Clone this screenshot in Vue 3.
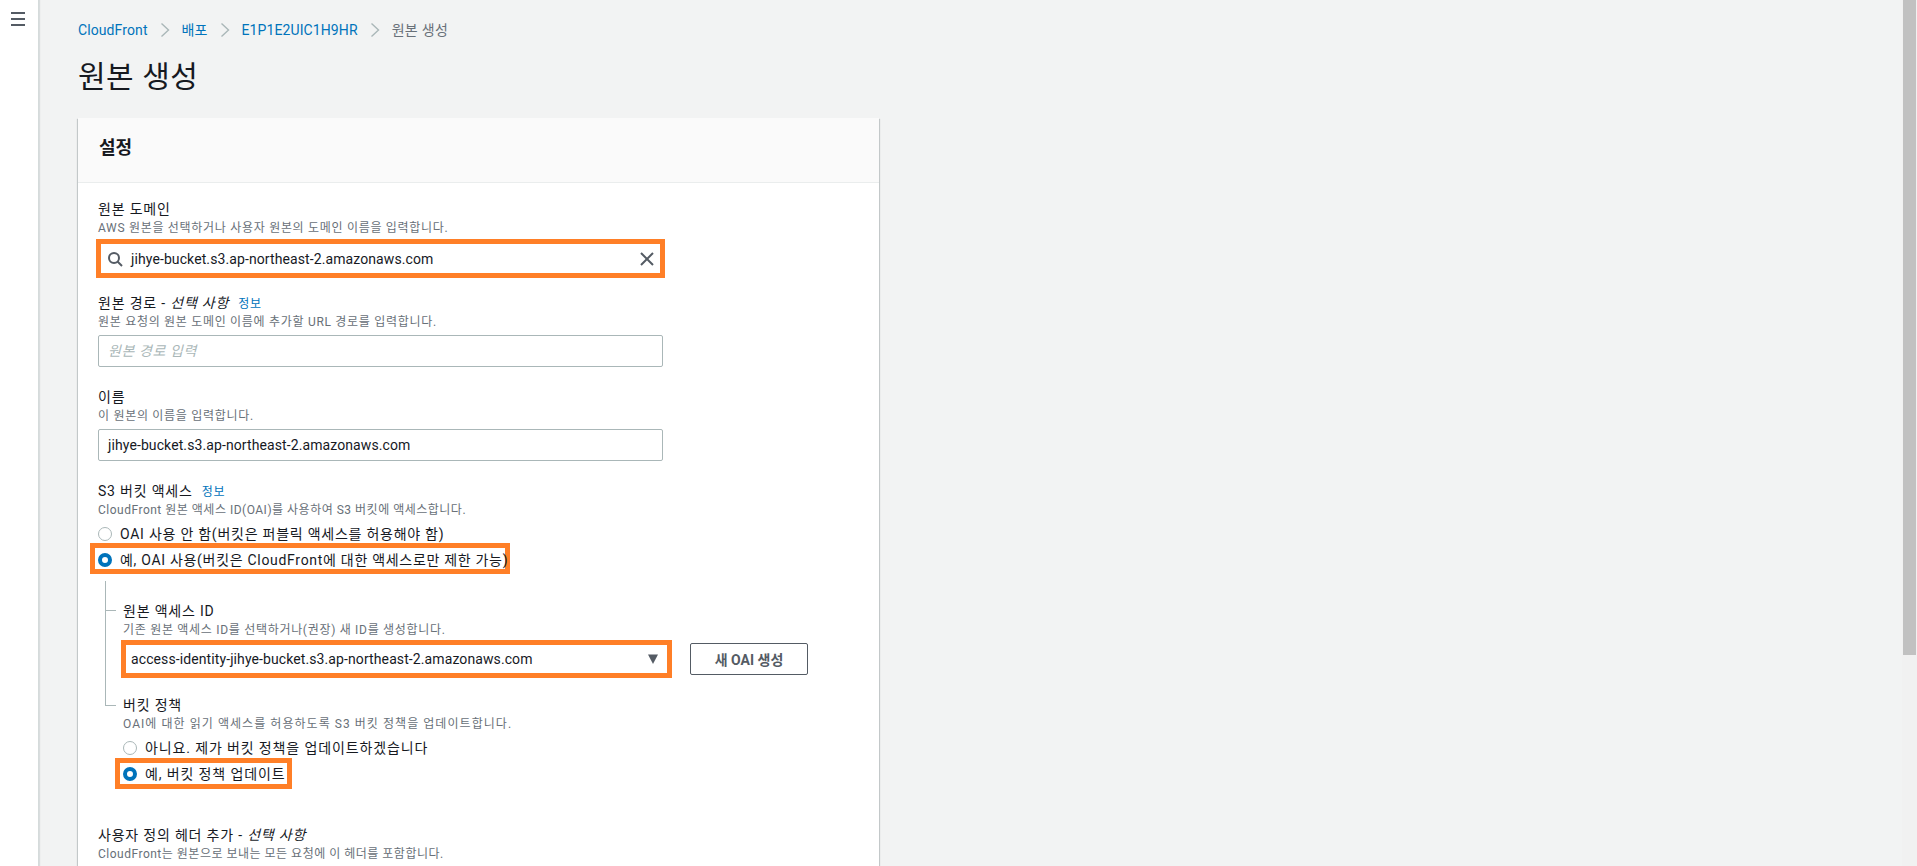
<template>
  <div class="app">
    <!-- 좌측 접힌 내비게이션 -->
    <aside class="sidebar">
      <svg class="menu" width="14" height="14" viewBox="0 0 14 14">
        <path d="M0 1h14M0 7h14M0 13h14" stroke="#545b64" stroke-width="2" fill="none" />
      </svg>
    </aside>

    <main class="main">
      <nav class="crumbs">
        <template v-for="(c, i) in crumbs" :key="c.text">
          <svg v-if="i > 0" class="chev" width="10" height="16" viewBox="0 0 10 16">
            <path d="M1.5 1.5L8.5 8L1.5 14.5" stroke="#aab7b8" stroke-width="1.4" fill="none" />
          </svg>
          <a :class="{ current: !c.link }">{{ c.text }}</a>
        </template>
      </nav>
      <h1 class="title">원본 생성</h1>

      <section class="card">
        <header class="card-head">설정</header>
        <div class="card-body">
          <div class="field">
            <div class="label">원본 도메인</div>
            <div class="desc">AWS 원본을 선택하거나 사용자 원본의 도메인 이름을 입력합니다.</div>
            <div class="hl hl-input">
              <svg class="search" width="16" height="16" viewBox="0 0 16 16">
                <circle cx="7" cy="7" r="5" stroke="#545b64" stroke-width="2" fill="none" />
                <path d="M10.5 10.5L15 15" stroke="#545b64" stroke-width="2" fill="none" />
              </svg>
              <span class="value">{{ domain }}</span>
              <svg class="clear" width="14" height="14" viewBox="0 0 14 14">
                <path d="M1 1L13 13M13 1L1 13" stroke="#545b64" stroke-width="2" fill="none" />
              </svg>
            </div>
          </div>

          <div class="field">
            <div class="label">원본 경로 - <i>선택 사항</i><a class="info">정보</a></div>
            <div class="desc">원본 요청의 원본 도메인 이름에 추가할 URL 경로를 입력합니다.</div>
            <div class="input placeholder">원본 경로 입력</div>
          </div>

          <div class="field">
            <div class="label">이름</div>
            <div class="desc">이 원본의 이름을 입력합니다.</div>
            <div class="input value">{{ domain }}</div>
          </div>

          <div class="field">
            <div class="label">S3 버킷 액세스<a class="info">정보</a></div>
            <div class="desc tight">CloudFront 원본 액세스 ID(OAI)를 사용하여 S3 버킷에 액세스합니다.</div>
            <div class="radios">
              <div class="radio-row">
                <span class="radio"></span>OAI 사용 안 함(버킷은 퍼블릭 액세스를 허용해야 함)
              </div>
              <div class="radio-row hl hl-radio">
                <span class="radio on"></span>예, OAI 사용(버킷은 CloudFront에 대한 액세스로만 제한 가능)
              </div>
            </div>
          </div>

          <!-- 트리 선으로 연결된 하위 설정 -->
          <div class="tree">
            <div class="tree-item">
              <span class="branch"></span>
              <div class="label">원본 액세스 ID</div>
              <div class="desc">기존 원본 액세스 ID를 선택하거나(권장) 새 ID를 생성합니다.</div>
              <div class="oai-row">
                <div class="hl hl-select">
                  <span class="value">access-identity-jihye-bucket.s3.ap-northeast-2.amazonaws.com</span>
                  <svg class="caret" width="12" height="12" viewBox="0 0 12 12">
                    <path d="M1 1.5H11L6 11Z" fill="#545b64" />
                  </svg>
                </div>
                <button class="btn">새 OAI 생성</button>
              </div>
            </div>
            <div class="tree-item second">
              <span class="branch"></span>
              <div class="label">버킷 정책</div>
              <div class="desc wide">OAI에 대한 읽기 액세스를 허용하도록 S3 버킷 정책을 업데이트합니다.</div>
              <div class="radios">
                <div class="radio-row">
                  <span class="radio"></span>아니요. 제가 버킷 정책을 업데이트하겠습니다
                </div>
                <div class="radio-row hl hl-policy">
                  <span class="radio on"></span>예, 버킷 정책 업데이트
                </div>
              </div>
            </div>
          </div>

          <div class="field headers">
            <div class="label">사용자 정의 헤더 추가 - <i>선택 사항</i></div>
            <div class="desc tight">CloudFront는 원본으로 보내는 모든 요청에 이 헤더를 포함합니다.</div>
          </div>
        </div>
      </section>
    </main>

    <!-- 스크롤바 -->
    <div class="scrollbar"><div class="thumb"></div></div>
  </div>
</template>

<script setup>
const domain = 'jihye-bucket.s3.ap-northeast-2.amazonaws.com'

const crumbs = [
  { text: 'CloudFront', link: true },
  { text: '배포', link: true },
  { text: 'E1P1E2UIC1H9HR', link: true },
  { text: '원본 생성', link: false },
]
</script>

<style>
html,
body {
  margin: 0;
  overflow: hidden;
}
</style>

<style scoped>
.app {
  position: relative;
  display: flex;
  height: 866px;
  overflow: hidden;
  background: #f2f3f3;
  color: #16191f;
  font-family: Roboto, "Noto Sans CJK KR", sans-serif;
  font-size: 14px;
  line-height: 20px;
}

.sidebar {
  width: 38px;
  flex: none;
  background: #fff;
  border-right: 1px solid #d5dbdb;
  box-shadow: 1px 0 1px rgba(0, 28, 36, 0.1);
}

.menu {
  display: block;
  margin: 12px 0 0 11px;
}

.main {
  flex: 1;
  min-width: 0;
  padding: 20px 0 0 38px;
}

.crumbs {
  display: flex;
  align-items: center;
  gap: 12px;
  height: 20px;
  padding-left: 1px;
}

.crumbs a {
  color: #0073bb;
  letter-spacing: 0.1px;
}

.crumbs a.current {
  color: #687078;
  letter-spacing: 0.3px;
}

.chev {
  flex: none;
}

.title {
  margin: 11px 0 0 1px;
  height: 52px;
  font-size: 30px;
  font-weight: 400;
  line-height: 52px;
  letter-spacing: 0.5px;
}

.card {
  width: 801px;
  margin: 15px 0 0 1px;
  background: #fff;
  box-shadow: 0 1px 1px 0 rgba(0, 28, 36, 0.3), 1px 1px 1px 0 rgba(0, 28, 36, 0.15),
    -1px 1px 1px 0 rgba(0, 28, 36, 0.15);
}

.card-head {
  height: 64px;
  padding-left: 21px;
  background: #fafafa;
  border-bottom: 1px solid #eaeded;
  font-size: 18px;
  font-weight: 700;
  line-height: 60px;
}

.card-body {
  min-height: 900px;
  padding: 16px 0 0 20px;
}

.field {
  margin-bottom: 20px;
}

.label {
  height: 20px;
  letter-spacing: 0.8px;
}

.desc {
  margin-top: 1px;
  height: 16px;
  font-size: 12px;
  line-height: 16px;
  letter-spacing: 0.7px;
  color: #687078;
}

.desc.wide {
  letter-spacing: 1.05px;
}

.desc.tight {
  letter-spacing: 0.5px;
}

.info {
  margin-left: 9px;
  color: #0073bb;
  font-size: 12px;
}

.value {
  letter-spacing: 0.1px;
}

.input {
  box-sizing: border-box;
  width: 565px;
  height: 32px;
  margin-top: 5px;
  padding: 0 9px;
  background: #fff;
  border: 1px solid #aab7b8;
  border-radius: 2px;
  line-height: 30px;
}

.placeholder {
  color: #aab7b8;
  font-style: italic;
  letter-spacing: 0.6px;
}

/* 주황색 강조 박스 */
.hl {
  box-sizing: border-box;
  background: #fff;
  border: 5px solid #ff7f27;
}

.hl-input {
  display: flex;
  align-items: center;
  width: 569px;
  height: 39px;
  margin: 3px 0 -5px -2px;
  padding: 0 6px 0 6px;
}

.hl-input .value {
  flex: 1;
  margin-left: 8px;
}

.radios {
  margin-top: 3px;
  letter-spacing: 0.75px;
  white-space: nowrap;
}

.radio-row {
  display: flex;
  align-items: center;
  height: 26px;
}

.radio {
  box-sizing: border-box;
  flex: none;
  width: 14px;
  height: 14px;
  margin-right: 8px;
  border: 1px solid #aab7b8;
  border-radius: 50%;
  background: #fff;
}

.radio.on {
  border: 4px solid #0073bb;
}

.hl-radio {
  width: 420px;
  height: 31px;
  margin: -4px 0 -3px -8px;
  padding: 2px 0 0 3px;
  letter-spacing: 0.7px;
}

.tree {
  box-sizing: border-box;
  height: 125px;
  margin: -13px 0 0 7px;
  padding-top: 20px;
  border-left: 1px solid #aab7b8;
}

.tree-item {
  position: relative;
  padding-left: 17px;
}

.branch {
  position: absolute;
  left: 0;
  top: 9px;
  width: 10px;
  border-top: 1px solid #aab7b8;
}

.tree-item.second {
  margin-top: 17px;
}

.tree-item.second .branch {
  top: 10px;
}

.oai-row {
  display: flex;
  align-items: flex-start;
  margin-top: 2px;
}

.hl-select {
  display: flex;
  align-items: center;
  justify-content: space-between;
  width: 551px;
  height: 38px;
  margin-left: -2px;
  padding: 0 8px 0 5px;
}

.caret {
  flex: none;
}

.btn {
  box-sizing: border-box;
  width: 118px;
  height: 32px;
  margin: 3px 0 0 18px;
  padding: 0;
  background: #fff;
  border: 1px solid #545b64;
  border-radius: 2px;
  color: #545b64;
  font: 700 14px Roboto, "Noto Sans CJK KR", sans-serif;
}

.tree-item .radios {
  margin-top: 3px;
  letter-spacing: 0.87px;
}

.hl-policy {
  width: 177px;
  height: 31px;
  margin: -3px 0 0 -8px;
  padding-left: 3px;
}

.headers {
  margin-top: 119px;
}

.scrollbar {
  position: absolute;
  top: 0;
  right: 0;
  bottom: 0;
  width: 15px;
  background: #f1f1f1;
}

.thumb {
  width: 13px;
  height: 655px;
  margin-left: 1px;
  background: #c1c1c1;
}
</style>
